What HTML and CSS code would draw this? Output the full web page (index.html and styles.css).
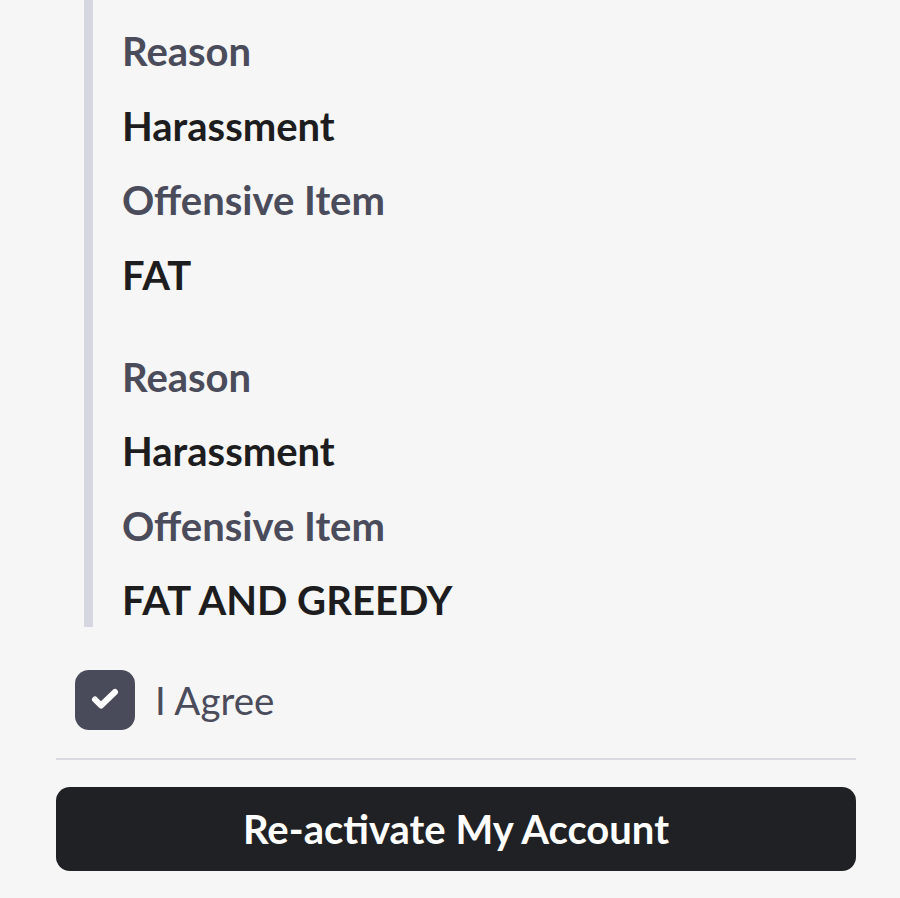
FILE: index.html
```html
<!DOCTYPE html>
<html lang="en">
<head>
    <meta charset="UTF-8">
    <meta name="viewport" content="width=device-width, initial-scale=1.0">
    <title>Re-activate Account</title>
    <link rel="stylesheet" href="styles.css">
</head>
<body>
    <div class="page">
        <div class="reports">
            <div class="report">
                <div class="label">Reason</div>
                <div class="value">Harassment</div>
                <div class="label">Offensive Item</div>
                <div class="value">FAT</div>
            </div>
            <div class="report">
                <div class="label">Reason</div>
                <div class="value">Harassment</div>
                <div class="label">Offensive Item</div>
                <div class="value">FAT AND GREEDY</div>
            </div>
        </div>
        <label class="agree">
            <svg class="checkbox" width="60" height="60" viewBox="0 0 60 60">
                <rect width="60" height="60" rx="14" fill="#4a4b5a"/>
                <path d="M20 29.5l6 6 14-13.5" fill="none" stroke="#fff" stroke-width="6" stroke-linecap="round" stroke-linejoin="round"/>
            </svg>
            I Agree
        </label>
        <hr class="divider">
        <button class="submit">Re-activate My Account</button>
    </div>
</body>
</html>
```

FILE: styles.css
```css
body { margin: 0; background: #f6f6f6; font-family: Lato, "Noto Sans", sans-serif; }
.page { padding: 0 44px 0 56px; }
.reports { margin-left: 28px; border-left: 9px solid #d5d6df; padding: 27px 0 3px 29px; }
.report { display: flex; flex-direction: column; gap: 26.5px; }
.report + .report { margin-top: 54px; }
.label, .value { font-size: 40px; line-height: 48px; font-weight: 700; }
.label { color: #4b4c5b; }
.value { color: #1d1d20; }
.agree { display: flex; align-items: center; gap: 20px; margin: 43px 0 0 19px; font-size: 38.5px; color: #4b4c5b; }
.checkbox { display: block; flex-shrink: 0; }
.divider { border: none; border-top: 2px solid #d9d9e2; margin: 28px 0 0; }
.submit { display: block; width: 100%; height: 84px; margin-top: 27px; border: none; border-radius: 14px; background: #202124; color: #fff; font-family: inherit; font-size: 40px; font-weight: 700; cursor: pointer; }
```
